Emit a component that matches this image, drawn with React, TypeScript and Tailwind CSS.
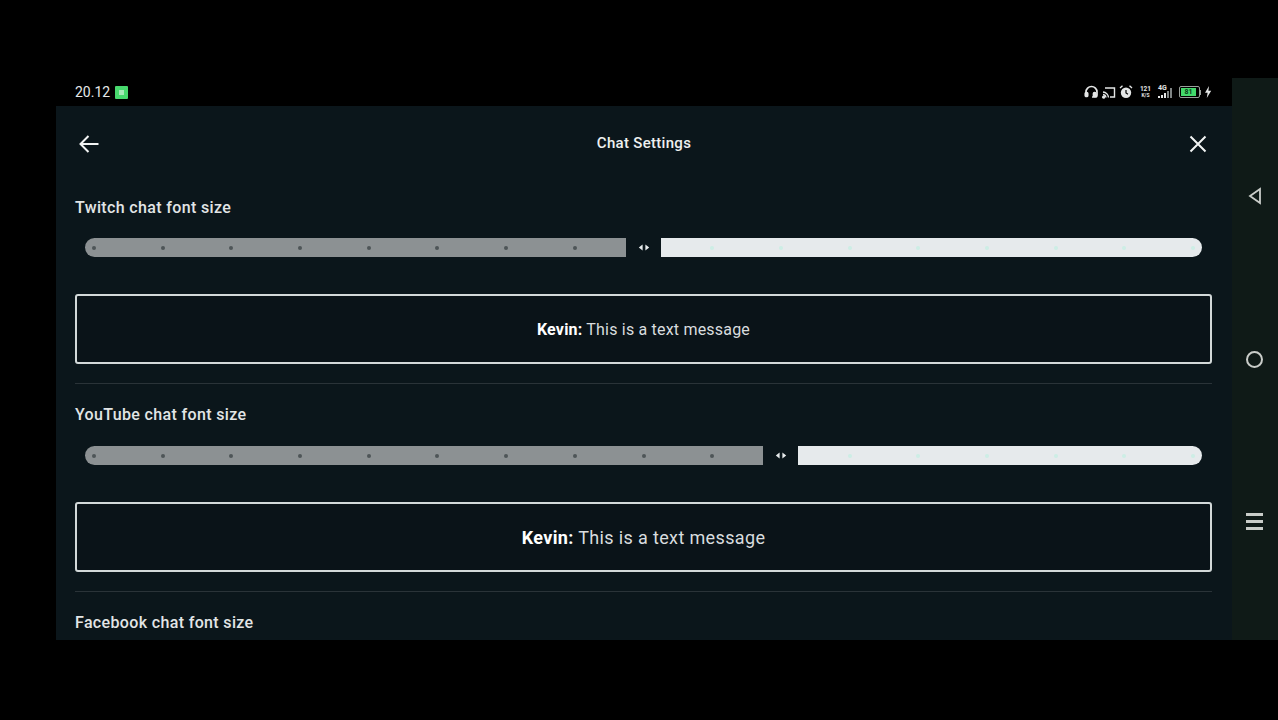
import React from "react";

const ticks = Array.from({ length: 17 }, (_, i) => i);

function Slider({ value }: { value: number }) {
  const leftW = 541 + (value - 8) * 68.7;
  return (
    <div className="relative mx-[10px] flex h-[19px] items-center">
      <div className="h-full rounded-l-full rounded-r-[2px] bg-[#8c9193]" style={{ width: leftW }} />
      <div className="flex w-[35px] shrink-0 items-center justify-center">
        <svg width="12" height="7" viewBox="0 0 12 7" fill="#e8eced">
          <path d="M4.6 0.6 V6.4 L0.8 3.5 Z" />
          <path d="M7.4 0.6 V6.4 L11.2 3.5 Z" />
        </svg>
      </div>
      <div className="h-full flex-1 rounded-l-[2px] rounded-r-full bg-[#e6eaec]" />
      <div className="absolute inset-0 flex items-center justify-between px-[7px]">
        {ticks.map((i) => (
          <span
            key={i}
            className={
              i < value
                ? "h-[4px] w-[4px] rounded-full bg-[#4e5558]"
                : i === value
                  ? "h-[4px] w-[4px] rounded-full bg-transparent"
                  : "h-[4px] w-[4px] rounded-full bg-[#cdeee5]"
            }
          />
        ))}
      </div>
    </div>
  );
}

function Section({ label, value, size, spacing, labelLeading }: { label: string; value: number; size: string; spacing: string; labelLeading: string }) {
  return (
    <section className="flex flex-col">
      <h2 className={`h-[20px] text-[16px] font-medium tracking-[0.35px] text-[#e2e5e6] ${labelLeading}`}>{label}</h2>
      <div className="mt-[21px]">
        <Slider value={value} />
      </div>
      <div className={`mt-[37px] flex h-[70px] items-center justify-center rounded-[3px] border-2 border-[#d3d9d9] bg-[#0a1318] text-[#d9dddf] ${size} ${spacing}`}>
        <span>
          <b className="font-bold text-white">Kevin:</b> This is a text message
        </span>
      </div>
      <div className="mb-[21px] mt-[19px] h-px bg-[#2a3338]" />
    </section>
  );
}

function StatusIcons() {
  return (
    <div className="flex items-center gap-[3px] text-[#e4e6e6]">
      <svg width="15" height="14" viewBox="0 0 15 14" fill="none" stroke="currentColor" strokeWidth="1.7">
        <path d="M2 9 V7 a5.5 5.5 0 0 1 11 0 V10 a2 2 0 0 1 -2 2 H8" />
        <rect x="1.3" y="7.5" width="2.4" height="4" rx="1" fill="currentColor" />
        <rect x="9.5" y="7.5" width="2.4" height="4" rx="1" fill="currentColor" />
      </svg>
      <svg width="14" height="13" viewBox="0 0 14 13" fill="none" stroke="currentColor" strokeWidth="1.4">
        <path d="M3 2 H12.5 V11 H8" />
        <path d="M1 6 a6 6 0 0 1 5.5 5.5 M1 8.5 a3.5 3.5 0 0 1 3 3" />
        <circle cx="1.6" cy="11.2" r="0.9" fill="currentColor" />
      </svg>
      <svg width="14" height="14" viewBox="0 0 14 14" fill="currentColor">
        <circle cx="7" cy="7.8" r="5.2" />
        <path d="M1 3 L3.5 0.8 M13 3 L10.5 0.8" stroke="currentColor" strokeWidth="1.4" />
        <path d="M7 5 V8 L9 9.2" stroke="#000" strokeWidth="1.2" fill="none" />
      </svg>
      <span className="ml-[2px] flex w-[15px] flex-col items-center text-[6.5px] font-bold leading-[6.5px]">
        <span>121</span>
        <span className="text-[5px] leading-[5px]">K/S</span>
      </span>
      <div className="relative ml-[2px] h-[14px] w-[18px]">
        <span className="absolute left-0 top-0 text-[7px] font-bold leading-[7px]">4G</span>
        <div className="absolute bottom-[1px] left-0 flex items-end gap-px">
          <span className="h-[2px] w-[2px] bg-current" />
          <span className="h-[3px] w-[2px] bg-current" />
          <span className="h-[5px] w-[2px] bg-current" />
          <span className="h-[7px] w-[2px] bg-[#7f8484]" />
          <span className="h-[10px] w-[2px] bg-[#7f8484]" />
        </div>
      </div>
      <div className="flex items-center">
        <div className="flex h-[12px] w-[21px] items-center rounded-[2px] border border-[#9aa09c] p-px">
          <div className="flex h-full w-[15px] items-center justify-center bg-[#43d96b] text-[7px] font-bold leading-none text-[#0b3a18]">81</div>
        </div>
        <span className="h-[5px] w-px bg-[#9aa09c]" />
      </div>
      <svg width="8" height="12" viewBox="0 0 8 12" fill="currentColor">
        <path d="M5 0 L1 6.8 H3.6 L2.8 12 L7.2 4.8 H4.4 Z" />
      </svg>
    </div>
  );
}

export default function App() {
  return (
    <div className="h-[720px] w-[1278px] overflow-hidden bg-black pt-[78px] font-['Roboto',sans-serif]">
      <div className="flex h-[562px] w-full">
        <div className="w-[56px] shrink-0" />
        <main className="flex w-[1176px] flex-col">
          <header className="flex h-[28px] shrink-0 items-center justify-between pl-[19px] pr-[20px]">
            <div className="flex items-center gap-[5px]">
              <span className="text-[14px] text-[#e6e8e8]">20.12</span>
              <span className="flex h-[13px] w-[13px] items-center justify-center rounded-[1px] bg-[#48d96e]">
                <span className="h-[5px] w-[5px] bg-[#a6e8b8]" />
              </span>
            </div>
            <StatusIcons />
          </header>
          <div className="flex min-h-0 flex-1 flex-col overflow-hidden bg-[#0b161b] pl-[19px] pr-[20px]">
            <div className="flex h-[75px] shrink-0 items-center justify-between pl-[3px] pr-[4px]">
              <svg width="22" height="22" viewBox="0 0 22 22" fill="none" stroke="#f2f4f4" strokeWidth="2">
                <path d="M20.5 11 H2.5 M10.5 3 L2.5 11 L10.5 19" />
              </svg>
              <h1 className="text-[15px] font-medium tracking-[0.3px] text-[#eef0f0]">Chat Settings</h1>
              <svg width="20" height="20" viewBox="0 0 20 20" fill="none" stroke="#f2f4f4" strokeWidth="2">
                <path d="M2.5 2.5 L17.5 17.5 M17.5 2.5 L2.5 17.5" />
              </svg>
            </div>
            <div className="pt-[16px]">
              <Section label="Twitch chat font size" value={8} size="pt-[2px] text-[16px]" spacing="tracking-[0.2px]" labelLeading="leading-[22px]" />
              <Section label="YouTube chat font size" value={10} size="text-[18px]" spacing="tracking-[0.36px]" labelLeading="leading-[20px]" />
              <h2 className="h-[20px] text-[16px] font-medium leading-[20px] tracking-[0.35px] text-[#e2e5e6]">Facebook chat font size</h2>
            </div>
          </div>
        </main>
        <nav className="flex flex-1 flex-col items-center bg-[#0f1a17] pr-px text-[#c9cdc9]">
          <div className="mt-[109px]">
            <svg width="14" height="18" viewBox="0 0 14 18" fill="none" stroke="currentColor" strokeWidth="1.8">
              <path d="M12 2 V16 L2 9 Z" />
            </svg>
          </div>
          <div className="mt-[146px] h-[17px] w-[17px] rounded-full border-2 border-current" />
          <div className="mt-[145px] flex flex-col gap-[4px]">
            <span className="h-[3px] w-[17px] bg-current" />
            <span className="h-[3px] w-[17px] bg-current" />
            <span className="h-[3px] w-[17px] bg-current" />
          </div>
        </nav>
      </div>
    </div>
  );
}
